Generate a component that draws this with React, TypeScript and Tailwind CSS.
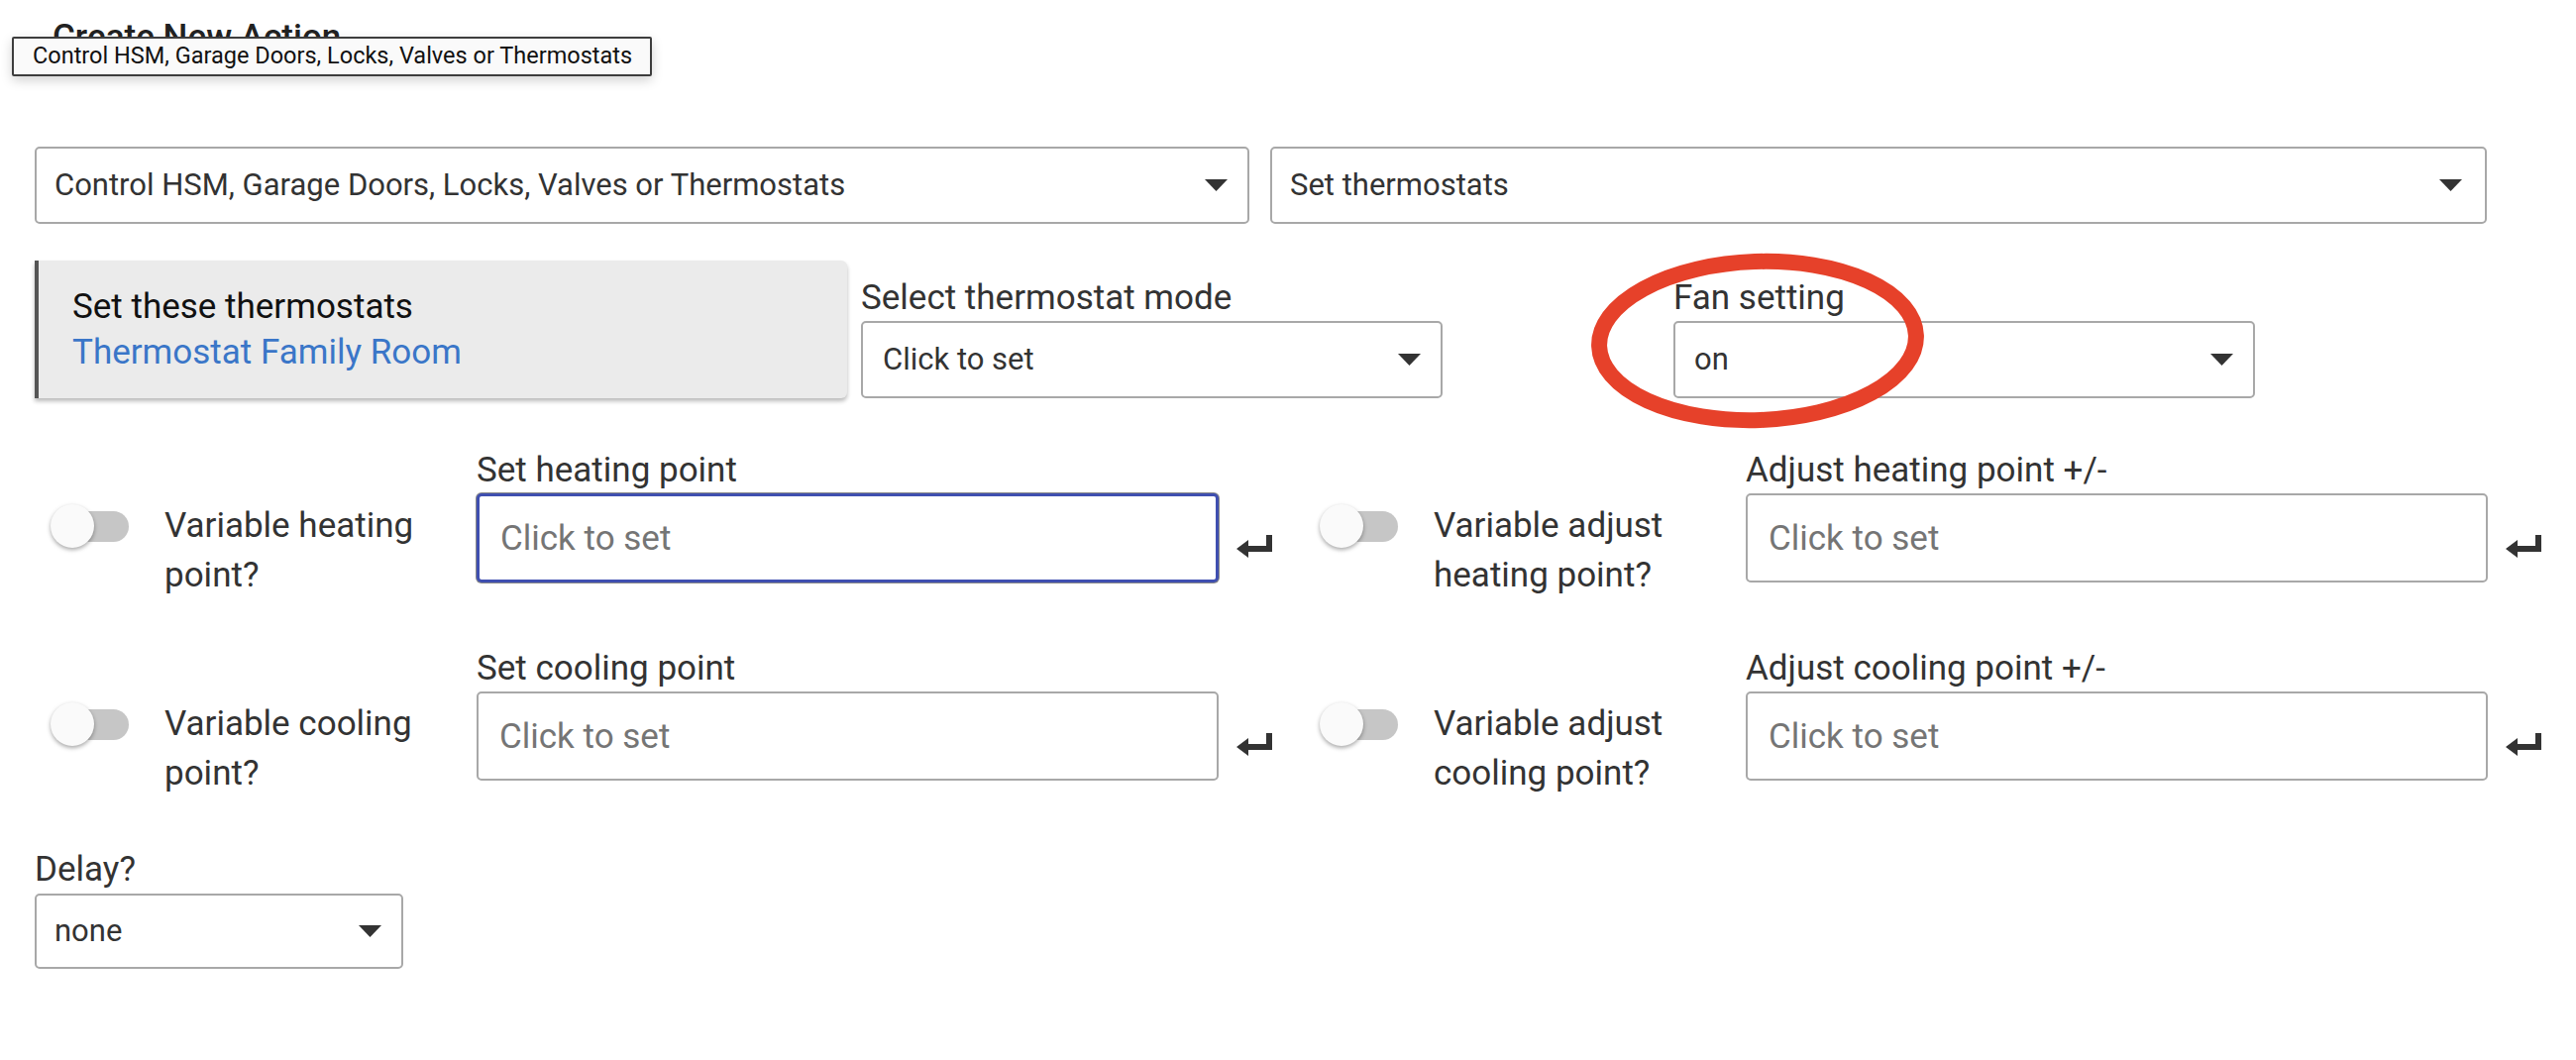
import React from 'react'

function Caret() {
  return (
    <svg width="23" height="12" viewBox="0 0 23 12" className="shrink-0">
      <path d="M0 0h23L11.5 12z" fill="#333" />
    </svg>
  )
}

function Select({ value, className }: { value: string; className: string }) {
  return (
    <div className={`flex items-center justify-between border-2 border-[#a8a8a8] rounded-[5px] bg-white pl-[18px] pr-[20px] text-[31px] text-[#333] ${className}`}>
      <span>{value}</span>
      <Caret />
    </div>
  )
}

function Toggle() {
  return (
    <div className="relative w-[80px] h-[44px]">
      <div className="absolute left-[5px] top-[7px] w-[74px] h-[31px] rounded-full bg-[#c6c6c6]" />
      <div className="absolute left-0 top-0 w-[44px] h-[44px] rounded-full bg-[#fafafa] shadow-[0_2px_4px_rgba(0,0,0,0.35)]" />
    </div>
  )
}

// heavy "return" arrow as in the reference
function ReturnIcon() {
  return (
    <svg width="37" height="24" viewBox="0 0 37 24">
      <path d="M30 0h6v17H12v6L0 14l12-9v6h18z" fill="#333" />
    </svg>
  )
}

function PointGroup({ toggleLabel, label, focused }: { toggleLabel: string; label: string; focused?: boolean }) {
  return (
    <div className="flex items-start h-[134px]">
      <div className="w-[131px] pl-[16px] mt-[55px]">
        <Toggle />
      </div>
      <div className="w-[315px] mt-[52px]">
        <p className="w-[280px] text-[35px] leading-[50px] text-[#333]">{toggleLabel}</p>
      </div>
      <div className="w-[749px]">
        <div className="text-[35px] leading-[42px] text-[#333]">{label}</div>
        <div
          className={`mt-[2px] h-[90px] rounded-[5px] bg-white flex items-center pl-[21px] pt-[3px] text-[35px] text-[#757575] ${
            focused ? 'border-[3px] border-[#3f4fb0] shadow-[0_0_0_1px_#8a8a8a]' : 'border-2 border-[#a8a8a8]'
          }`}
        >
          Click to set
        </div>
      </div>
      <div className="ml-[18px] mt-[86px]">
        <ReturnIcon />
      </div>
    </div>
  )
}

export default function App() {
  return (
    <div className="relative w-[2600px] h-[1070px] bg-white font-['Roboto',sans-serif] text-[#333] overflow-hidden">
      <div className="pl-[35px] pt-[17px]">
        <h2 className="pl-[18px] text-[35px] leading-[42px] font-medium text-[#222]">Create New Action</h2>

        <div className="flex gap-[21px] mt-[89px]">
          <Select value="Control HSM, Garage Doors, Locks, Valves or Thermostats" className="w-[1226px] h-[78px]" />
          <Select value="Set thermostats" className="w-[1228px] h-[78px] pr-[23px]" />
        </div>

        <div className="flex items-end mt-[37px]">
          <div className="w-[820px] h-[139px] bg-[#ebebeb] border-l-[4px] border-[#555] rounded-r-[6px] shadow-[0_3px_4px_rgba(0,0,0,0.28)] pl-[34px] pt-[24px]">
            <div className="text-[35px] leading-[46px] text-[#111]">Set these thermostats</div>
            <div className="text-[35px] leading-[46px] text-[#3a76c8]">Thermostat Family Room</div>
          </div>
          <div className="ml-[14px] w-[587px]">
            <div className="text-[35px] leading-[42px]">Select thermostat mode</div>
            <Select value="Click to set" className="mt-[2px] h-[78px] pl-[20px]" />
          </div>
          <div className="ml-[233px] w-[587px]">
            <div className="text-[35px] leading-[42px]">Fan setting</div>
            <Select value="on" className="mt-[2px] h-[78px] pl-[19px]" />
          </div>
        </div>

        <div className="flex mt-[52px]">
          <PointGroup toggleLabel="Variable heating point?" label="Set heating point" focused />
          <div className="ml-[31px]">
            <PointGroup toggleLabel="Variable adjust heating point?" label="Adjust heating point +/-" />
          </div>
        </div>

        <div className="flex mt-[66px]">
          <PointGroup toggleLabel="Variable cooling point?" label="Set cooling point" />
          <div className="ml-[31px]">
            <PointGroup toggleLabel="Variable adjust cooling point?" label="Adjust cooling point +/-" />
          </div>
        </div>

        <div className="mt-[69px] w-[372px]">
          <div className="text-[35px] leading-[42px]">Delay?</div>
          <Select value="none" className="mt-[3px] h-[76px]" />
        </div>
      </div>

      <div className="absolute left-[12px] top-[37px] h-[40px] w-[646px] flex items-center pl-[19px] bg-[#fafafa] border-2 border-[#3d3d3d] rounded-[2px] shadow-[0_4px_12px_rgba(0,0,0,0.18)] text-[23.5px] text-[#111]">
        Control HSM, Garage Doors, Locks, Valves or Thermostats
      </div>

      <svg className="absolute left-[1595px] top-[246px]" width="360" height="196" viewBox="0 0 360 196">
        <ellipse cx="179" cy="98" rx="160" ry="80" fill="none" stroke="#e6412a" strokeWidth="16" transform="rotate(-2 179 98)" />
      </svg>
    </div>
  )
}
